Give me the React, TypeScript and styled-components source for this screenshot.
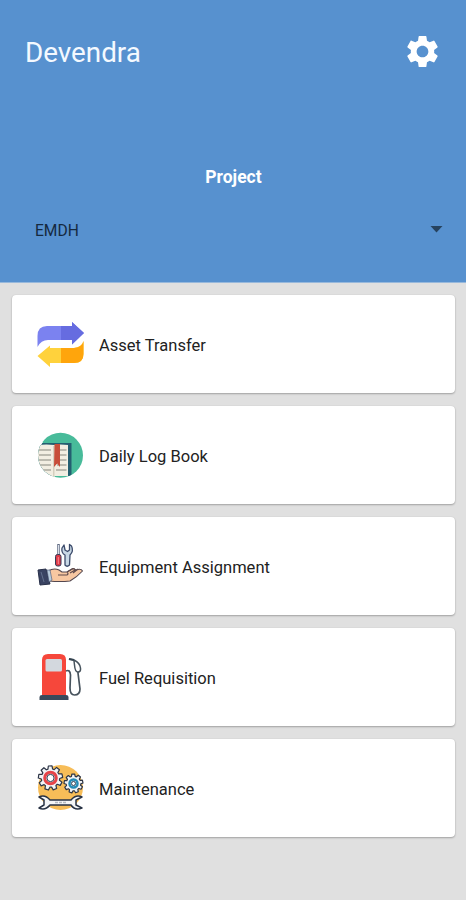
import React from "react";
import styled, { createGlobalStyle } from "styled-components";
import { MdSettings } from "react-icons/md";

const GlobalStyle = createGlobalStyle`
  body { margin: 0; background: #e0e0e0; font-family: Roboto, "Liberation Sans", sans-serif; }
  * { box-sizing: border-box; }
`;

const Screen = styled.main`
  display: flex;
  flex-direction: column;
  width: 466px;
  height: 900px;
  overflow: hidden;
  background: #e0e0e0;
`;

const Header = styled.header`
  display: flex;
  flex-direction: column;
  height: 283px;
  padding: 31px 23px 0 25px;
  background: #5791cf;
  border-bottom: 1px solid #98b9dc;
`;

const TitleBar = styled.div`
  display: flex;
  align-items: center;
  justify-content: space-between;
  height: 41px;
  color: #fff;
`;

const UserName = styled.h1`
  margin: 0;
  padding-top: 2px;
  font-size: 27.8px;
  line-height: 40px;
  font-weight: 400;
  color: #f4f9ff;
`;

const SettingsButton = styled.button`
  display: flex;
  padding: 0;
  margin-right: 1px;
  border: 0;
  background: none;
  color: #fff;
`;

const ProjectLabel = styled.h2`
  margin: 93px 0 0;
  padding-right: 1px;
  font-size: 17.5px;
  line-height: 24px;
  font-weight: 700;
  text-align: center;
  color: #fff;
`;

const ProjectSelect = styled.div`
  display: flex;
  align-items: center;
  justify-content: space-between;
  margin-top: 29px;
  padding-left: 10px;
  height: 25px;
  font-size: 15.6px;
  line-height: 20px;
  color: #15293f;
`;

const Caret = styled.svg`
  width: 13px;
  height: 7px;
  margin-bottom: 3px;
  fill: #27435f;
`;

const Menu = styled.nav`
  display: flex;
  flex-direction: column;
  gap: 13px;
  padding: 12px 11.5px;
`;

const Card = styled.a`
  display: flex;
  align-items: center;
  height: 98px;
  padding-left: 18.5px;
  border-radius: 4px;
  background: #fff;
  box-shadow: 0 1px 2px rgba(0, 0, 0, 0.28), 0 0 1px rgba(0, 0, 0, 0.12);
`;

const CardIcon = styled.svg`
  width: 60px;
  height: 60px;
  flex: none;
`;

const CardLabel = styled.span`
  margin-left: 9px;
  padding-top: 3px;
  font-size: 16.5px;
  line-height: 24px;
  letter-spacing: 0.01px;
  color: #222;
`;

const TransferIcon = () => (
  <CardIcon viewBox="0 -1 60 60">
    <path d="M7.500 32V21Q7.500 11 17 11H42V7L54 18L42 29.500V25H18Q11 25 7.500 32Z" fill="#7b82f0" />
    <path d="M31 11H42V7L54 18L42 29.500V25H31Z" fill="#666ce0" />
    <path d="M53.500 26V39Q53.500 48 44 48H20V52L7.500 41L20 30.500V33H44Q52 32 53.500 26Z" fill="#ffd23c" />
    <path d="M31 33H44Q52 32 53.500 26V39Q53.500 48 44 48H31Z" fill="#ffa50c" />
  </CardIcon>
);

const BookIcon = () => (
  <CardIcon viewBox="0 0 60 60">
    <defs>
      <clipPath id="book-disc"><circle cx="30.500" cy="30.300" r="22.500" /></clipPath>
    </defs>
    <g clipPath="url(#book-disc)">
      <rect width="60" height="60" fill="#48bb9a" />
      <path d="M7 18H41.500V51H7Z" fill="#245e70" />
      <path d="M7 20Q17 19 24 20Q30 19 38 20V51H25L24 53H7Z" fill="#f2eee2" />
      <path d="M23 21H24.500V52H23Z" fill="#d4cfbf" />
      <path d="M9 25H21M9 30H21M9 35H21M9 40H21M13 45H21M30 25H36.500M30 30H36.500M30 35H36.500M27 40H36.500M26 45H36.500" stroke="#aaa99e" strokeWidth="1.500" />
      <path d="M24.500 19H30V42L27.200 38.500L24 42Z" fill="#c74e3a" />
    </g>
    <path d="M7 17H13L11 20H7Z" fill="#fff" />
  </CardIcon>
);

const EquipmentIcon = () => (
  <CardIcon viewBox="0 -1 60 60" strokeLinejoin="round">
    <path d="M28.500 7V19" stroke="#626c84" strokeWidth="2.500" />
    <path d="M28.500 8V18" stroke="#d9dfe8" strokeWidth="1" />
    <rect x="25.500" y="17.500" width="5.500" height="11.500" rx="2" fill="#dc3947" stroke="#343b56" strokeWidth="1" />
    <path d="M28.300 20V27" stroke="#ff8790" />
    <path d="M34 8L32 11Q31 16 35 18L35 28Q37 30.500 39.500 28L40 18Q44 14 41.500 9L39.500 7.500V13L37.500 14.500L35 13Z" fill="#c8d8e5" stroke="#3c4b6b" strokeWidth="1.300" />
    <path d="M18 34Q24 30.500 29 33L32 35H37L43 31.500L46 33Q51 31 52.500 34Q47 40 40 44Q30 45 19 44Z" fill="#f7c7a1" stroke="#53474f" strokeWidth="1.100" />
    <path d="M28 38H37Q39 37 37 35M37 35L42 32Q45 31 45 33L40 36M43 36L48 32" fill="none" stroke="#604b4d" strokeWidth="1.200" />
    <path d="M8 33L16 32L20 47L10 48Z" fill="#394362" stroke="#272f48" />
    <path d="M17 33L20 33L22 43L19 45Z" fill="#b9ccdc" stroke="#445373" strokeWidth=".6" />
    <path d="M11 35L14 45" stroke="#62708d" />
  </CardIcon>
);

const FuelIcon = () => (
  <CardIcon viewBox="0 0 60 60">
    <path d="M12 49V13Q12 7 18 7H30Q36 7 36 13V49Z" fill="#f6473b" />
    <rect x="15.500" y="12" width="16.500" height="12.500" rx="1.500" fill="#d3d8de" />
    <path d="M9.500 53V50Q9.500 48 12 48H36Q38.500 48 38.500 50V53Z" fill="#39495b" />
    <path d="M36 24Q40 22 40.500 28L40 41Q40 48 44.500 48Q50 48 50 42L48 26V20" fill="none" stroke="#47535d" strokeWidth="1.700" />
    <path d="M39 12L44 13Q50 16 50.500 21Q51 25 48 25Q45 25 44.500 18L44 14" fill="#fff" stroke="#47535d" strokeWidth="1.500" />
    <path d="M39 12L44 13" stroke="#34434f" strokeWidth="2.200" />
  </CardIcon>
);

function cogPath(cx: number, cy: number, inner: number, outer: number) {
  const points: string[] = [];
  for (let i = 0; i < 9; i++) {
    const steps: [number, number][] = [[-0.32, inner], [-0.19, outer], [0.19, outer], [0.32, inner]];
    for (const [offset, radius] of steps) {
      const angle = (i * Math.PI * 2) / 9 - 0.2 + offset * 0.8;
      points.push(`${cx + Math.cos(angle) * radius},${cy + Math.sin(angle) * radius}`);
    }
  }
  return `M${points.join("L")}Z`;
}

const MaintenanceIcon = () => (
  <CardIcon viewBox="0 1 60 60" strokeLinejoin="round">
    <circle cx="30.500" cy="30.500" r="22.500" fill="#f7bd58" />
    <path d={cogPath(20.5, 21, 9.2, 12.2)} fill="#f2f4f6" stroke="#2d3546" strokeWidth="1.200" />
    <circle cx="20.500" cy="21" r="5.800" fill="#fff" stroke="#e64449" strokeWidth="3" />
    <circle cx="20.500" cy="21" r="3.600" fill="#fff" stroke="#263b50" strokeWidth="1" />
    <path d={cogPath(43.5, 26.5, 7.3, 9.5)} fill="#f2f4f6" stroke="#2d3546" strokeWidth="1.200" />
    <circle cx="43.500" cy="26.500" r="4" fill="#fff" stroke="#258bb5" strokeWidth="2.500" />
    <circle cx="43.500" cy="26.500" r="2" fill="#fff" stroke="#263b50" strokeWidth="1" />
    <path d="M9 40Q15 37 20 43H41Q46 37 52 40L46 43V48L52 51Q45 54 41 48H20Q15 54 9 51L14 48V43Z" fill="#f4f5f6" stroke="#293345" strokeWidth="1.500" />
    <path d="M25 45.500H37" stroke="#b4b9be" strokeWidth="1.500" strokeDasharray="3 1" />
  </CardIcon>
);

const items = [
  { label: "Asset Transfer", Icon: TransferIcon },
  { label: "Daily Log Book", Icon: BookIcon },
  { label: "Equipment Assignment", Icon: EquipmentIcon },
  { label: "Fuel Requisition", Icon: FuelIcon },
  { label: "Maintenance", Icon: MaintenanceIcon },
];

export default function App() {
  return (
    <>
      <GlobalStyle />
      <Screen>
        <Header>
          <TitleBar>
            <UserName>Devendra</UserName>
            <SettingsButton aria-label="Settings"><MdSettings size={39} /></SettingsButton>
          </TitleBar>
          <ProjectLabel>Project</ProjectLabel>
          <ProjectSelect>
            <span>EMDH</span>
            <Caret viewBox="0 0 13 7"><path d="M0.500 0H12.500L6.500 6.500Z" /></Caret>
          </ProjectSelect>
        </Header>
        <Menu>
          {items.map(({ label, Icon }) => (
            <Card key={label}>
              <Icon />
              <CardLabel>{label}</CardLabel>
            </Card>
          ))}
        </Menu>
      </Screen>
    </>
  );
}
